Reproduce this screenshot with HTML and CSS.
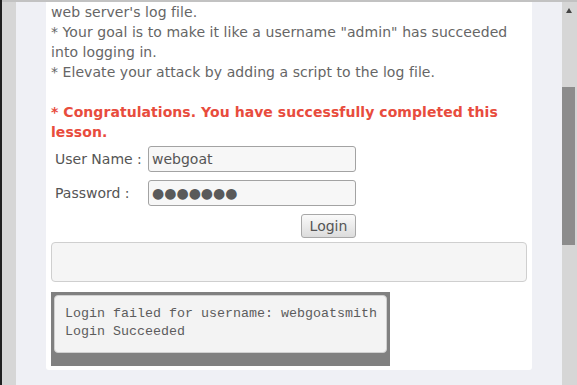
FILE: index.html
```html
<!DOCTYPE html>
<html lang="en">
<head>
  <meta charset="UTF-8" />
  <title>Log Spoofing</title>
  <link rel="stylesheet" href="styles.css">
</head>
<body>
  <div class="window">
    <div class="edge"></div>
    <div class="pane">
      <div class="side"></div>
      <div class="main">
        <div class="content">
          <p class="intro">
            web server's log file.<br>
            * Your goal is to make it like a username "admin" has succeeded into logging in.<br>
            * Elevate your attack by adding a script to the log file.
          </p>
          <p class="done">* Congratulations. You have successfully completed this lesson.</p>

          <form class="login" onsubmit="return false">
            <label for="user">User Name :</label>
            <input type="text" id="user" value="webgoat" />
            <label for="pass">Password :</label>
            <input type="text" id="pass" class="pass" value="●●●●●●●" />
            <div class="actions">
              <button type="submit">Login</button>
            </div>
          </form>

          <div class="message"></div>

          <div class="log">
            <pre>Login failed for username: webgoatsmith
Login Succeeded</pre>
          </div>
        </div>
      </div>
      <div class="scrollbar">
        <div class="arrow"></div>
        <div class="thumb"></div>
      </div>
    </div>
  </div>
</body>
</html>
```

FILE: styles.css
```css
body {
  margin: 0;
  height: 385px;
  overflow: hidden;
  font-family: "DejaVu Sans", sans-serif;
  font-size: 14px;
  color: #666;
}
.window {
  display: flex;
  height: 385px;
}
.edge {
  width: 2px;
  background: #1f1f1f;
}
.pane {
  flex: 1;
  display: flex;
  border-top: 2px solid #c2c2c2;
}
.side {
  width: 14px;
  background: #d6d6d6;
}
.main {
  flex: 1;
  background: #eff0f5;
  padding: 0 30px;
}
.content {
  background: #fff;
  padding: 0 5px 4px;
  border-radius: 0 0 3px 3px;
  line-height: 20px;
}
.intro {
  margin: 0 0 20px;
  letter-spacing: 0.06px;
}
.done {
  margin: 0;
  color: #e84c3d;
  font-weight: bold;
  letter-spacing: 0.06px;
}
.login {
  display: grid;
  grid-template-columns: 93px 208px;
  row-gap: 8px;
  align-items: center;
  margin-top: 4px;
  padding-left: 4px;
}
.login label {
  color: #555;
}
.login input {
  height: 26px;
  box-sizing: border-box;
  border: 1px solid #a3a3a3;
  border-radius: 3px;
  background: #f7f7f7;
  padding: 0 3px;
  font-family: "DejaVu Sans", sans-serif;
  font-size: 14px;
  color: #555;
}
.login .pass {
  letter-spacing: 0;
  color: #5a5a5a;
}
.actions {
  grid-column: 2;
  text-align: right;
  line-height: 0;
}
.actions button {
  height: 24px;
  width: 55px;
  border: 1px solid #a8a8a8;
  border-radius: 3px;
  background: linear-gradient(#fafafa, #dcdcdc);
  font-family: "DejaVu Sans", sans-serif;
  font-size: 14px;
  color: #555;
  padding: 0;
}
.message {
  margin-top: 4px;
  height: 38px;
  border: 1px solid #cfcfcf;
  border-radius: 4px;
  background: #f5f5f5;
}
.log {
  margin-top: 10px;
  width: 333px;
  padding: 3px 3px 13px;
  background: #808080;
}
.log pre {
  margin: 0;
  padding: 9px 10px 11px;
  border: 1px solid #d0d0d0;
  border-radius: 4px;
  background: #f3f3f3;
  font-family: "Liberation Mono", monospace;
  font-size: 13.33px;
  line-height: 18px;
  color: #5c5c5c;
}
.scrollbar {
  width: 15px;
  background: #d6d6d6;
  position: relative;
}
.arrow {
  position: absolute;
  left: 4px;
  top: 6px;
  border-left: 3px solid transparent;
  border-right: 3px solid transparent;
  border-bottom: 5px solid #444;
}
.thumb {
  position: absolute;
  left: 0;
  right: 2px;
  top: 85px;
  height: 158px;
  background: #8c8c8c;
}
```
